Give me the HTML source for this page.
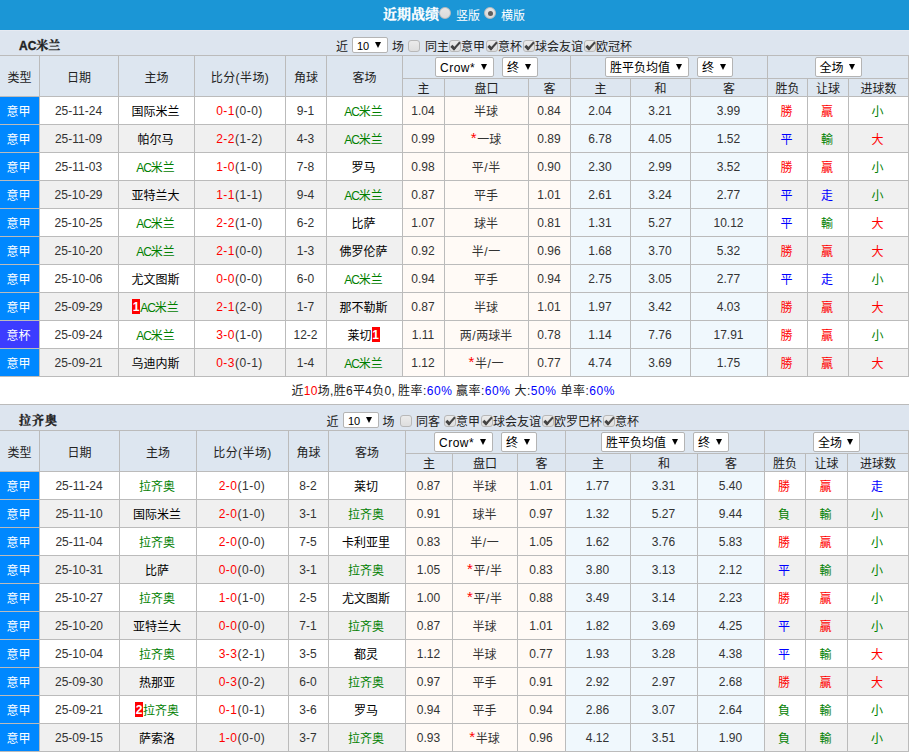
<!DOCTYPE html>
<html lang="zh-CN"><head><meta charset="utf-8"><title>近期战绩</title>
<style>
html,body{margin:0;padding:0;background:#fff;}
body{width:910px;height:752px;overflow:hidden;font-family:"Liberation Sans","Noto Sans CJK SC",sans-serif;font-size:12px;color:#333;}
.wrap{position:relative;width:909px;height:752px;overflow:hidden;}
.bar{position:relative;height:30px;background:#1b96d6;color:#fff;}
.bar .bt{position:absolute;left:383px;top:4px;font-size:14px;font-weight:bold;line-height:20px;font-family:"Liberation Sans","Noto Serif CJK SC",serif;-webkit-text-stroke:.3px #fff;}
.bar .bl{position:absolute;top:6px;line-height:20px;font-size:12px;}
.bar .l1{left:456px}.bar .l2{left:501px}
.rd{position:absolute;top:7px;width:10px;height:10px;border:1px solid #bcbcbc;border-radius:50%;background:linear-gradient(#e6e6e6,#dadada);box-sizing:content-box;}
.rd:nth-of-type(1){left:439px}.rd.on{left:484px}
.rd.on:after{content:"";position:absolute;left:2.5px;top:2.5px;width:5px;height:5px;border-radius:50%;background:#5e5e5e;}
.trow{position:relative;height:25px;background:#dde5ef;box-sizing:border-box;}
.trow.first{box-shadow:inset 0 1px 0 #e6eaf2}
.tname{position:absolute;left:19px;top:6px;line-height:20px;font-weight:bold;font-size:12px;color:#222;font-family:"Liberation Sans","Noto Serif CJK SC",serif;-webkit-text-stroke:.35px #222}
.tn2{letter-spacing:1px}
.filt{position:absolute;left:0;top:8px;height:18px;line-height:18px;white-space:nowrap;color:#222;width:909px;}
.filt span{position:absolute;top:0;}
.filt .f1{left:336px}.filt .f2{left:392px}.filt .f3{left:425px}.filt .f4{left:449px}
.filt .c0{position:absolute;left:408px;top:2px;margin-left:0}
.filt .s10{left:352px;top:-1px;}
.sel{display:inline-block;position:relative;box-sizing:border-box;background:#fff;border:1px solid #b4b4b4;border-radius:2px;text-align:left;vertical-align:middle;color:#000;}
.sel .ar{position:absolute;right:6px;top:50%;margin-top:-3px;width:0;height:0;border-left:3.5px solid transparent;border-right:3.5px solid transparent;border-top:6px solid #000;}
.s10{width:36px;height:16px;line-height:16px;padding-left:4px;font-size:11px;}
.cb{display:inline-block;box-sizing:border-box;width:12px;height:12px;border:1px solid #b8b8b8;border-radius:3px;background:linear-gradient(#ebebeb,#dedede);vertical-align:top;position:relative;top:2px;margin-left:1px;}
.f4 .cb:first-child{margin-left:0}
.cb.on:after{content:"";position:absolute;left:3px;top:-1px;width:3px;height:7px;border:solid #444;border-width:0 2.5px 3px 0;transform:rotate(42deg);}
table.t{border-collapse:separate;border-spacing:0;table-layout:fixed;width:909px;}
table.t th,table.t td{box-sizing:border-box;border-right:1px solid #bbb;border-bottom:1px solid #bbb;padding:0;text-align:center;font-weight:normal;overflow:hidden;white-space:nowrap;}
table.t th{background:#dde6f0;color:#222;border-top:0;}
tr.h1 th{border-top:1px solid #bbb;height:24px;}
tr.h2 th{height:18px;line-height:14px;padding-top:3px;}
table.t td{height:28px;line-height:25px;padding-top:2px;padding-right:1px;}
table.t td.c{line-height:24px;padding-top:3px;padding-right:2px;}
tr.o td{background:#fff}tr.e td{background:#f0f0f0}
table.t td.od{background:#fffaf6}
table.t td.eu{background:#f0f8fd}
table.t td.lg1{background:#0088ff;color:#fff;}
table.t td.lg2{background:#3c3cff;color:#fff;}
table.t td.sco{letter-spacing:.5px}
.r{color:#f00}.g{color:#008000}.b{color:#00f}.k{color:#000}
.st{color:#f00;font-style:normal;font-size:15px;line-height:0;margin-right:.5px;position:relative;top:-1px}
.rc{display:inline-block;background:#f00;color:#fff;font-weight:bold;width:8px;height:15px;line-height:17px;overflow:hidden;text-align:center;vertical-align:top;margin-top:3px;letter-spacing:0}
.sa,.sb,.sc,.sd{height:20px;line-height:20px;font-size:12px;padding-left:4px;}
.sa{letter-spacing:.5px}
th .sel{top:0}
.sa{width:59px;margin-right:8px}.sb{width:36px}.sc{width:84px;margin-right:8px}.sd{width:47px}
.sum{position:relative;height:27px;line-height:27px;background:#fff;border-bottom:1px solid #bbb;color:#222;white-space:nowrap;}
.sum>span{position:absolute;top:1px}
.u1{left:291.5px}.u2{left:398px}.u3{left:456px}.u4{left:514.5px}.u5{left:560.5px}
.ac{letter-spacing:-1px}
.ft2 .f1{left:326.5px}.ft2 .s10{left:343px}.ft2 .f2{left:382.5px}.ft2 .c0{left:399.5px}.ft2 .f3{left:416px}.ft2 .f4{left:444px}
.u1{letter-spacing:.3px}.u2,.u3,.u4,.u5{letter-spacing:.5px}
th.hs{letter-spacing:.4px}
.sl{font-style:normal;padding:0 .6px}
table.t td.od.c{padding-right:1px}

</style></head><body>
<div class="wrap">
<div class="bar"><span class="bt">近期战绩</span><i class="rd"></i><span class="bl l1">竖版</span><i class="rd on"></i><span class="bl l2">横版</span></div>
<div class="trow first"><span class="tname tn1">AC米兰</span><div class="filt ft1"><span class="f1">近</span><span class="sel s10">10<i class="ar"></i></span><span class="f2">场</span><i class="cb c0"></i><span class="f3">同主</span><span class="f4"><i class="cb on"></i>意甲<i class="cb on"></i>意杯<i class="cb on"></i>球会友谊<i class="cb on"></i>欧冠杯</span></div></div>
<table class="t" cellspacing="0" cellpadding="0"><colgroup>
<col style="width:40px">
<col style="width:79px">
<col style="width:76px">
<col style="width:91px">
<col style="width:41px">
<col style="width:76px">
<col style="width:42px">
<col style="width:84px">
<col style="width:42px">
<col style="width:60px">
<col style="width:60px">
<col style="width:77px">
<col style="width:40px">
<col style="width:41px">
<col style="width:60px">
</colgroup>
<tr class="h1"><th rowspan="2">类型</th><th rowspan="2">日期</th><th rowspan="2">主场</th><th rowspan="2" class="hs">比分(半场)</th><th rowspan="2">角球</th><th rowspan="2">客场</th><th colspan="3"><span class="sel sa">Crow*<i class="ar"></i></span><span class="sel sb">终<i class="ar"></i></span></th><th colspan="3"><span class="sel sc">胜平负均值<i class="ar"></i></span><span class="sel sb">终<i class="ar"></i></span></th><th colspan="3"><span class="sel sd">全场<i class="ar"></i></span></th></tr>
<tr class="h2"><th>主</th><th>盘口</th><th>客</th><th>主</th><th>和</th><th>客</th><th>胜负</th><th>让球</th><th>进球数</th></tr>
<tr class="o"><td class="c lg1">意甲</td><td>25-11-24</td><td class="c"><span class="k">国际米兰</span></td><td class="sco"><span class="r">0-1</span>(0-0)</td><td>9-1</td><td class="c"><span class="g"><span class="ac">AC</span>米兰</span></td><td class="od">1.04</td><td class="od c">半球</td><td class="od">0.84</td><td class="eu">2.04</td><td class="eu">3.21</td><td class="eu">3.99</td><td class="c r">勝</td><td class="c r">贏</td><td class="c g">小</td></tr>
<tr class="e"><td class="c lg1">意甲</td><td>25-11-09</td><td class="c"><span class="k">帕尔马</span></td><td class="sco"><span class="r">2-2</span>(1-2)</td><td>4-3</td><td class="c"><span class="g"><span class="ac">AC</span>米兰</span></td><td class="od">0.99</td><td class="od c"><i class="st">*</i>一球</td><td class="od">0.89</td><td class="eu">6.78</td><td class="eu">4.05</td><td class="eu">1.52</td><td class="c b">平</td><td class="c g">輸</td><td class="c r">大</td></tr>
<tr class="o"><td class="c lg1">意甲</td><td>25-11-03</td><td class="c"><span class="g"><span class="ac">AC</span>米兰</span></td><td class="sco"><span class="r">1-0</span>(1-0)</td><td>7-8</td><td class="c"><span class="k">罗马</span></td><td class="od">0.98</td><td class="od c">平<i class="sl">/</i>半</td><td class="od">0.90</td><td class="eu">2.30</td><td class="eu">2.99</td><td class="eu">3.52</td><td class="c r">勝</td><td class="c r">贏</td><td class="c g">小</td></tr>
<tr class="e"><td class="c lg1">意甲</td><td>25-10-29</td><td class="c"><span class="k">亚特兰大</span></td><td class="sco"><span class="r">1-1</span>(1-1)</td><td>9-4</td><td class="c"><span class="g"><span class="ac">AC</span>米兰</span></td><td class="od">0.87</td><td class="od c">平手</td><td class="od">1.01</td><td class="eu">2.61</td><td class="eu">3.24</td><td class="eu">2.77</td><td class="c b">平</td><td class="c b">走</td><td class="c g">小</td></tr>
<tr class="o"><td class="c lg1">意甲</td><td>25-10-25</td><td class="c"><span class="g"><span class="ac">AC</span>米兰</span></td><td class="sco"><span class="r">2-2</span>(1-0)</td><td>6-2</td><td class="c"><span class="k">比萨</span></td><td class="od">1.07</td><td class="od c">球半</td><td class="od">0.81</td><td class="eu">1.31</td><td class="eu">5.27</td><td class="eu">10.12</td><td class="c b">平</td><td class="c g">輸</td><td class="c r">大</td></tr>
<tr class="e"><td class="c lg1">意甲</td><td>25-10-20</td><td class="c"><span class="g"><span class="ac">AC</span>米兰</span></td><td class="sco"><span class="r">2-1</span>(0-0)</td><td>1-3</td><td class="c"><span class="k">佛罗伦萨</span></td><td class="od">0.92</td><td class="od c">半<i class="sl">/</i>一</td><td class="od">0.96</td><td class="eu">1.68</td><td class="eu">3.70</td><td class="eu">5.32</td><td class="c r">勝</td><td class="c r">贏</td><td class="c r">大</td></tr>
<tr class="o"><td class="c lg1">意甲</td><td>25-10-06</td><td class="c"><span class="k">尤文图斯</span></td><td class="sco"><span class="r">0-0</span>(0-0)</td><td>6-0</td><td class="c"><span class="g"><span class="ac">AC</span>米兰</span></td><td class="od">0.94</td><td class="od c">平手</td><td class="od">0.94</td><td class="eu">2.75</td><td class="eu">3.05</td><td class="eu">2.77</td><td class="c b">平</td><td class="c b">走</td><td class="c g">小</td></tr>
<tr class="e"><td class="c lg1">意甲</td><td>25-09-29</td><td class="c"><b class="rc">1</b><span class="g"><span class="ac">AC</span>米兰</span></td><td class="sco"><span class="r">2-1</span>(2-0)</td><td>1-7</td><td class="c"><span class="k">那不勒斯</span></td><td class="od">0.87</td><td class="od c">半球</td><td class="od">1.01</td><td class="eu">1.97</td><td class="eu">3.42</td><td class="eu">4.03</td><td class="c r">勝</td><td class="c r">贏</td><td class="c r">大</td></tr>
<tr class="o"><td class="c lg2">意杯</td><td>25-09-24</td><td class="c"><span class="g"><span class="ac">AC</span>米兰</span></td><td class="sco"><span class="r">3-0</span>(1-0)</td><td>12-2</td><td class="c"><span class="k">莱切</span><b class="rc">1</b></td><td class="od">1.11</td><td class="od c">两<i class="sl">/</i>两球半</td><td class="od">0.78</td><td class="eu">1.14</td><td class="eu">7.76</td><td class="eu">17.91</td><td class="c r">勝</td><td class="c r">贏</td><td class="c g">小</td></tr>
<tr class="e"><td class="c lg1">意甲</td><td>25-09-21</td><td class="c"><span class="k">乌迪内斯</span></td><td class="sco"><span class="r">0-3</span>(0-1)</td><td>1-4</td><td class="c"><span class="g"><span class="ac">AC</span>米兰</span></td><td class="od">1.12</td><td class="od c"><i class="st">*</i>半<i class="sl">/</i>一</td><td class="od">0.77</td><td class="eu">4.74</td><td class="eu">3.69</td><td class="eu">1.75</td><td class="c r">勝</td><td class="c r">贏</td><td class="c r">大</td></tr>
</table>
<div class="sum"><span class="u1">近<span class="r">10</span>场,胜6平4负0,</span><span class="u2">胜率:<span class="b">60%</span></span><span class="u3">赢率:<span class="b">60%</span></span><span class="u4">大:<span class="b">50%</span></span><span class="u5">单率:<span class="b">60%</span></span></div>
<div class="trow"><span class="tname tn2">拉齐奥</span><div class="filt ft2"><span class="f1">近</span><span class="sel s10">10<i class="ar"></i></span><span class="f2">场</span><i class="cb c0"></i><span class="f3">同客</span><span class="f4"><i class="cb on"></i>意甲<i class="cb on"></i>球会友谊<i class="cb on"></i>欧罗巴杯<i class="cb on"></i>意杯</span></div></div>
<table class="t" cellspacing="0" cellpadding="0"><colgroup>
<col style="width:40px">
<col style="width:80px">
<col style="width:77px">
<col style="width:92px">
<col style="width:40px">
<col style="width:77px">
<col style="width:47px">
<col style="width:65px">
<col style="width:48px">
<col style="width:65px">
<col style="width:67px">
<col style="width:67px">
<col style="width:41px">
<col style="width:42px">
<col style="width:61px">
</colgroup>
<tr class="h1"><th rowspan="2">类型</th><th rowspan="2">日期</th><th rowspan="2">主场</th><th rowspan="2" class="hs">比分(半场)</th><th rowspan="2">角球</th><th rowspan="2">客场</th><th colspan="3"><span class="sel sa">Crow*<i class="ar"></i></span><span class="sel sb">终<i class="ar"></i></span></th><th colspan="3"><span class="sel sc">胜平负均值<i class="ar"></i></span><span class="sel sb">终<i class="ar"></i></span></th><th colspan="3"><span class="sel sd">全场<i class="ar"></i></span></th></tr>
<tr class="h2"><th>主</th><th>盘口</th><th>客</th><th>主</th><th>和</th><th>客</th><th>胜负</th><th>让球</th><th>进球数</th></tr>
<tr class="o"><td class="c lg1">意甲</td><td>25-11-24</td><td class="c"><span class="g">拉齐奥</span></td><td class="sco"><span class="r">2-0</span>(1-0)</td><td>8-2</td><td class="c"><span class="k">莱切</span></td><td class="od">0.87</td><td class="od c">半球</td><td class="od">1.01</td><td class="eu">1.77</td><td class="eu">3.31</td><td class="eu">5.40</td><td class="c r">勝</td><td class="c r">贏</td><td class="c b">走</td></tr>
<tr class="e"><td class="c lg1">意甲</td><td>25-11-10</td><td class="c"><span class="k">国际米兰</span></td><td class="sco"><span class="r">2-0</span>(1-0)</td><td>3-1</td><td class="c"><span class="g">拉齐奥</span></td><td class="od">0.91</td><td class="od c">球半</td><td class="od">0.97</td><td class="eu">1.32</td><td class="eu">5.27</td><td class="eu">9.44</td><td class="c g">負</td><td class="c g">輸</td><td class="c g">小</td></tr>
<tr class="o"><td class="c lg1">意甲</td><td>25-11-04</td><td class="c"><span class="g">拉齐奥</span></td><td class="sco"><span class="r">2-0</span>(0-0)</td><td>7-5</td><td class="c"><span class="k">卡利亚里</span></td><td class="od">0.83</td><td class="od c">半<i class="sl">/</i>一</td><td class="od">1.05</td><td class="eu">1.62</td><td class="eu">3.76</td><td class="eu">5.83</td><td class="c r">勝</td><td class="c r">贏</td><td class="c g">小</td></tr>
<tr class="e"><td class="c lg1">意甲</td><td>25-10-31</td><td class="c"><span class="k">比萨</span></td><td class="sco"><span class="r">0-0</span>(0-0)</td><td>3-1</td><td class="c"><span class="g">拉齐奥</span></td><td class="od">1.05</td><td class="od c"><i class="st">*</i>平<i class="sl">/</i>半</td><td class="od">0.83</td><td class="eu">3.80</td><td class="eu">3.13</td><td class="eu">2.12</td><td class="c b">平</td><td class="c g">輸</td><td class="c g">小</td></tr>
<tr class="o"><td class="c lg1">意甲</td><td>25-10-27</td><td class="c"><span class="g">拉齐奥</span></td><td class="sco"><span class="r">1-0</span>(1-0)</td><td>2-5</td><td class="c"><span class="k">尤文图斯</span></td><td class="od">1.00</td><td class="od c"><i class="st">*</i>平<i class="sl">/</i>半</td><td class="od">0.88</td><td class="eu">3.49</td><td class="eu">3.14</td><td class="eu">2.23</td><td class="c r">勝</td><td class="c r">贏</td><td class="c g">小</td></tr>
<tr class="e"><td class="c lg1">意甲</td><td>25-10-20</td><td class="c"><span class="k">亚特兰大</span></td><td class="sco"><span class="r">0-0</span>(0-0)</td><td>7-1</td><td class="c"><span class="g">拉齐奥</span></td><td class="od">0.87</td><td class="od c">半球</td><td class="od">1.01</td><td class="eu">1.82</td><td class="eu">3.69</td><td class="eu">4.25</td><td class="c b">平</td><td class="c r">贏</td><td class="c g">小</td></tr>
<tr class="o"><td class="c lg1">意甲</td><td>25-10-04</td><td class="c"><span class="g">拉齐奥</span></td><td class="sco"><span class="r">3-3</span>(2-1)</td><td>3-5</td><td class="c"><span class="k">都灵</span></td><td class="od">1.12</td><td class="od c">半球</td><td class="od">0.77</td><td class="eu">1.93</td><td class="eu">3.28</td><td class="eu">4.38</td><td class="c b">平</td><td class="c g">輸</td><td class="c r">大</td></tr>
<tr class="e"><td class="c lg1">意甲</td><td>25-09-30</td><td class="c"><span class="k">热那亚</span></td><td class="sco"><span class="r">0-3</span>(0-2)</td><td>6-0</td><td class="c"><span class="g">拉齐奥</span></td><td class="od">0.97</td><td class="od c">平手</td><td class="od">0.91</td><td class="eu">2.92</td><td class="eu">2.97</td><td class="eu">2.68</td><td class="c r">勝</td><td class="c r">贏</td><td class="c r">大</td></tr>
<tr class="o"><td class="c lg1">意甲</td><td>25-09-21</td><td class="c"><b class="rc">2</b><span class="g">拉齐奥</span></td><td class="sco"><span class="r">0-1</span>(0-1)</td><td>3-6</td><td class="c"><span class="k">罗马</span></td><td class="od">0.94</td><td class="od c">平手</td><td class="od">0.94</td><td class="eu">2.86</td><td class="eu">3.07</td><td class="eu">2.64</td><td class="c g">負</td><td class="c g">輸</td><td class="c g">小</td></tr>
<tr class="e"><td class="c lg1">意甲</td><td>25-09-15</td><td class="c"><span class="k">萨索洛</span></td><td class="sco"><span class="r">1-0</span>(0-0)</td><td>3-7</td><td class="c"><span class="g">拉齐奥</span></td><td class="od">0.93</td><td class="od c"><i class="st">*</i>半球</td><td class="od">0.96</td><td class="eu">4.12</td><td class="eu">3.51</td><td class="eu">1.90</td><td class="c g">負</td><td class="c g">輸</td><td class="c g">小</td></tr>
</table>
</div>
</body></html>
